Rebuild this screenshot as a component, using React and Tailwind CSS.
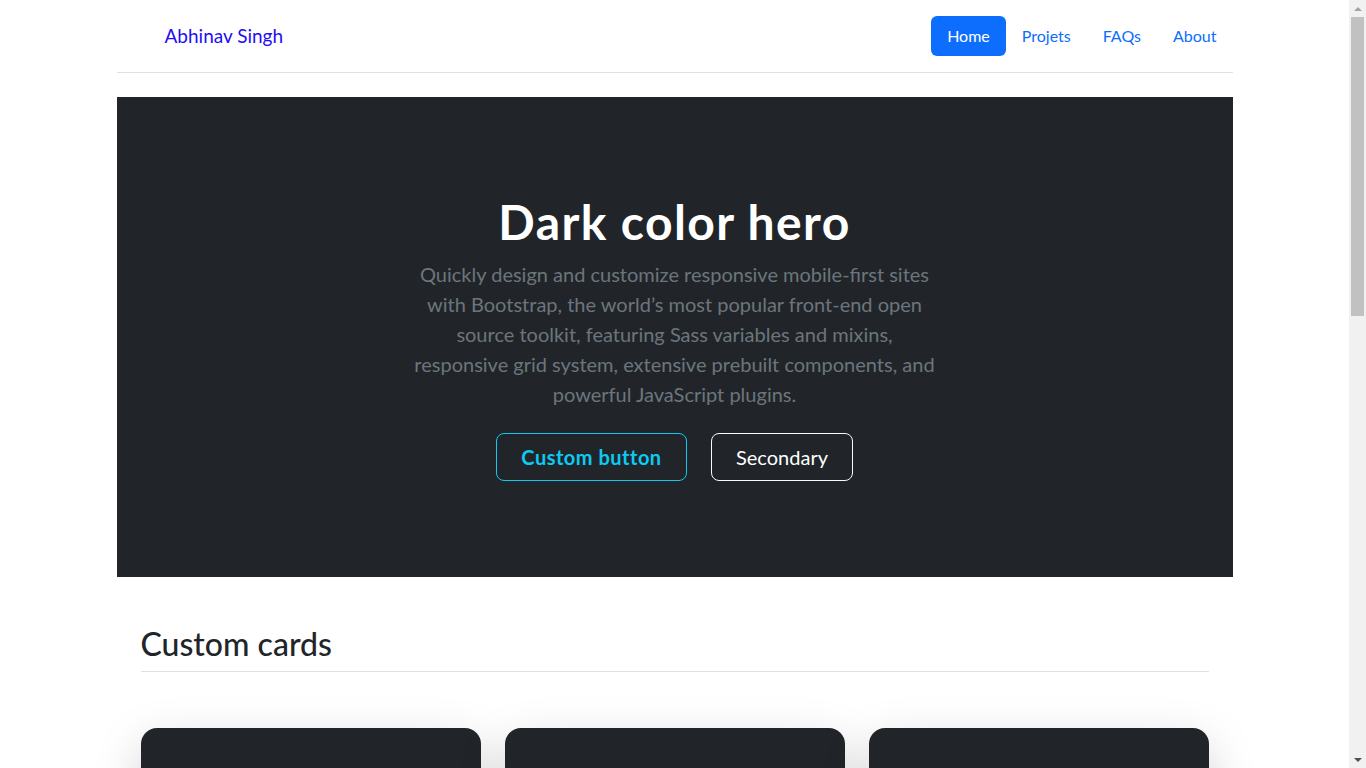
import { MapPin, Calendar } from "lucide-react";

const font = { fontFamily: '"Lato", "Liberation Sans", sans-serif' };

const navItems = ["Home", "Projets", "FAQs", "About"];

const cards = [
  { title: "Short title, long jacket", place: "Earth", when: "3d" },
  { title: "Much longer title wraps", place: "Pakistan", when: "4d" },
  { title: "Another longer title", place: "California", when: "5d" },
];

function Header() {
  return (
    <header className="flex items-center justify-between border-b border-[#dee2e6] py-4 mb-6">
      <a href="/" className="flex items-center text-[19px] leading-[30px] text-[#1f0ef5]">
        <span className="w-10 mr-2" />
        <span>Abhinav Singh</span>
      </a>
      <ul className="flex items-center">
        {navItems.map((item, i) => (
          <li key={item}>
            <a
              href="#"
              className={
                i === 0
                  ? "block rounded-md bg-[#0d6efd] px-4 py-2 text-base leading-6 text-white"
                  : "block px-4 py-2 text-base leading-6 text-[#0d6efd]"
              }
            >
              {item}
            </a>
          </li>
        ))}
      </ul>
    </header>
  );
}

function Hero() {
  return (
    <div className="bg-[#212529] px-6 py-12 text-center">
      <div className="py-12">
        <h1 className="mb-2 text-[48px] font-bold leading-[1.2] tracking-[1.4px] text-white">
          Dark color hero
        </h1>
        <div className="mx-auto w-[540px]">
          <p className="mb-6 whitespace-nowrap text-[20px] leading-[30px] text-[#6c757d]">
            Quickly design and customize responsive mobile-first sites
            <br />
            with Bootstrap, the world’s most popular front-end open
            <br />
            source toolkit, featuring Sass variables and mixins,
            <br />
            responsive grid system, extensive prebuilt components, and
            <br />
            powerful JavaScript plugins.
          </p>
          <div className="flex justify-center gap-6">
            <button className="h-12 w-[191px] rounded-lg border border-[#0dcaf0] text-[20px] font-bold tracking-[0.5px] text-[#0dcaf0]">
              Custom button
            </button>
            <button className="h-12 w-[142px] rounded-lg border border-[#f8f9fa] text-[20px] text-white">
              Secondary
            </button>
          </div>
        </div>
      </div>
    </div>
  );
}

function Cards() {
  return (
    <div className="px-6 py-12">
      <h2 className="border-b border-[#dee2e6] pb-2 text-[32px] font-medium leading-[1.2] text-[#212529]">
        Custom cards
      </h2>
      <div className="grid grid-cols-3 gap-6 pt-14 pb-12">
        {cards.map((card) => (
          <div
            key={card.title}
            className="flex h-[420px] flex-col overflow-hidden rounded-2xl bg-[#212529] p-12 pb-4 text-white shadow-[0_1rem_3rem_rgba(0,0,0,0.175)]"
          >
            <h3 className="mt-12 pt-12 mb-6 text-[40px] font-bold leading-none">{card.title}</h3>
            <ul className="mt-auto flex items-center gap-4">
              <li className="mr-auto">
                <span className="block h-8 w-8 rounded-full border border-white bg-[#495057]" />
              </li>
              <li className="flex items-center gap-2 text-sm">
                <MapPin size={16} />
                <span>{card.place}</span>
              </li>
              <li className="flex items-center gap-2 text-sm">
                <Calendar size={16} />
                <span>{card.when}</span>
              </li>
            </ul>
          </div>
        ))}
      </div>
    </div>
  );
}

function Scrollbar() {
  return (
    <aside className="sticky top-0 flex h-[768px] w-[17px] shrink-0 flex-col bg-[#f1f1f1]">
      <div className="flex h-[17px] items-center justify-center">
        <span className="block h-0 w-0 border-x-[4px] border-b-[4px] border-x-transparent border-b-[#a3a3a3]" />
      </div>
      <div className="mx-[2px] h-[299px] bg-[#c1c1c1]" />
      <div className="flex-1" />
      <div className="flex h-[17px] items-center justify-center">
        <span className="block h-0 w-0 border-x-[4px] border-t-[4px] border-x-transparent border-t-[#505050]" />
      </div>
    </aside>
  );
}

export default function App() {
  return (
    <div className="flex items-start bg-white" style={font}>
      <div className="min-h-[1850px] w-[1349px] shrink-0">
        <div className="mx-auto max-w-[1140px] px-3">
          <Header />
          <Hero />
          <Cards />
        </div>
      </div>
      <Scrollbar />
    </div>
  );
}
